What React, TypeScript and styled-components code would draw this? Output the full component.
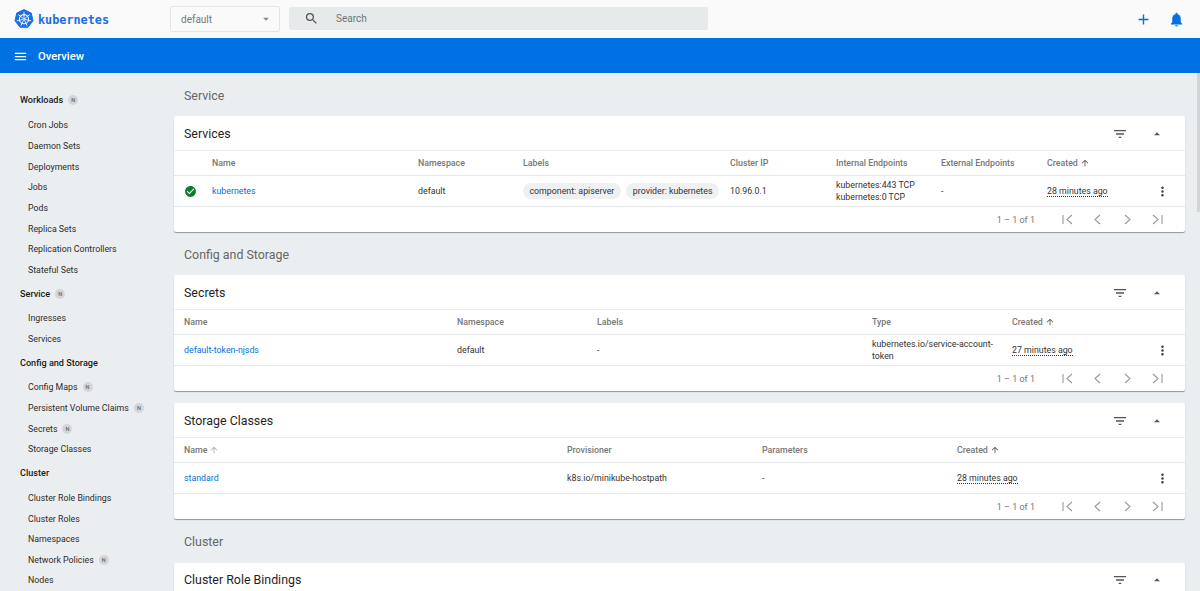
import React from 'react';
import styled, { createGlobalStyle } from 'styled-components';
import {
  MdMenu, MdSearch, MdAdd, MdNotifications, MdFilterList, MdArrowDropUp, MdArrowDropDown,
  MdMoreVert, MdCheckCircle, MdArrowUpward,
} from 'react-icons/md';

const Global = createGlobalStyle`
  html, body { margin: 0; padding: 0; height: 100%; overflow: hidden; background: #ebeef0; }
  body { font-family: Roboto, "Liberation Sans", sans-serif; -webkit-font-smoothing: antialiased; }
  * { box-sizing: border-box; }
`;

const Page = styled.div`
  position: relative;
  width: 1200px;
  height: 591px;
  overflow: hidden;
  display: flex;
  flex-direction: column;
  background: #ebeef0;
`;
const Toolbar = styled.header`
  height: 38px;
  flex: none;
  background: #fafafa;
  display: flex;
  align-items: center;
  padding-left: 14px;
`;
const Brand = styled.div`
  width: 156px;
  display: flex;
  align-items: center;
  gap: 4px;
  flex: none;
`;
const BrandName = styled.span`
  font-family: "DejaVu Sans Mono", "Liberation Mono", monospace;
  font-size: 11.8px;
  font-weight: 700;
  color: #1a6ee0;
  margin-top: 1px;
`;
const NsSelect = styled.div`
  width: 110px;
  height: 26px;
  border: 1px solid #e3e6e8;
  border-radius: 2px;
  display: flex;
  align-items: center;
  justify-content: space-between;
  padding: 0 6px 0 10px;
  font-size: 10px;
  color: #777;
  flex: none;
`;
const SearchBox = styled.div`
  width: 419px;
  height: 23px;
  margin-left: 9px;
  background: #e7eaeb;
  border-radius: 2px;
  display: flex;
  align-items: center;
  padding-left: 15px;
  gap: 17px;
  font-size: 10px;
  color: #6f7375;
  flex: none;
  margin-top: -1px;
`;
const ToolbarActions = styled.div`
  margin-left: auto;
  display: flex;
  align-items: center;
  gap: 16px;
  padding-right: 15px;
  color: #0071e3;
`;
const BlueBar = styled.div`
  height: 35px;
  flex: none;
  background: #0071e3;
  color: #fff;
  display: flex;
  align-items: center;
  padding: 1px 0 0 13px;
  gap: 10px;
  font-size: 11.2px;
  font-weight: 500;
`;
const Body = styled.div`
  flex: 1;
  display: flex;
  min-height: 0;
`;
const Sidebar = styled.nav`
  width: 174px;
  flex: none;
  padding-top: 16.6px;
  display: flex;
  flex-direction: column;
`;
const Category = styled.div`
  height: 20px;
  margin-top: 3.4px;
  padding-left: 20px;
  display: flex;
  align-items: center;
  gap: 5px;
  font-size: 9.1px;
  font-weight: 500;
  color: #1a1a1a;
  &:first-child { margin-top: 0; margin-bottom: 1px; }
  & + a { margin-top: 4.4px; }
`;
const NavItem = styled.a`
  height: 20.67px;
  flex: none;
  padding-left: 28px;
  display: flex;
  align-items: center;
  gap: 5px;
  font-size: 8.8px;
  color: #2c2c2c;
`;
const NewBadge = styled.span`
  width: 10px;
  height: 10px;
  border-radius: 50%;
  background: #d3d6d8;
  color: #666;
  font-size: 5.5px;
  display: inline-flex;
  align-items: center;
  justify-content: center;
  font-weight: 500;
`;
const Content = styled.main`
  width: 1011px;
  flex: none;
`;
const SectionTitle = styled.h2<{ $gap?: number }>`
  margin: 0;
  height: ${(p) => p.$gap ?? 43.4}px;
  display: flex;
  align-items: center;
  padding: 2px 0 0 10px;
  font-size: 12.4px;
  font-weight: 400;
  color: #666;
`;
const Card = styled.section<{ $mb?: number }>`
  background: #fff;
  border-radius: 2px;
  height: 115.6px;
  margin-bottom: ${(p) => p.$mb ?? 0}px;
  box-shadow: 0 1px 1px rgba(0, 0, 0, 0.38);
  display: flex;
  flex-direction: column;
  overflow: hidden;
`;
const CardHeader = styled.div`
  height: 35px;
  flex: none;
  display: flex;
  align-items: center;
  padding: 0 10px;
  border-bottom: 1.5px solid #eceeef;
  font-size: 12.4px;
  color: #1f1f1f;
`;
const CardTitle = styled.span`
  flex: 1;
`;
const CardActions = styled.div`
  display: flex;
  align-items: center;
  gap: 22px;
  padding: 1px 11px 0 0;
  color: #555;
`;
const Row = styled.div<{ $cols: string; $h: number }>`
  display: grid;
  grid-template-columns: ${(p) => p.$cols};
  height: ${(p) => p.$h}px;
  flex: none;
  align-items: center;
  padding-left: 10px;
  border-bottom: 1px solid #e6e8e9;
  font-size: 8.8px;
  color: #333;
`;
const HeadCell = styled.div`
  font-size: 8.8px;
  font-weight: 500;
  color: #777;
  display: flex;
  align-items: center;
  gap: 2px;
`;
const Cell = styled.div`
  line-height: 12.5px;
  min-width: 0;
`;
const LinkText = styled.span`
  color: #0071e3;
`;
const Chips = styled.div`
  display: flex;
  gap: 5.5px;
`;
const Chip = styled.span`
  height: 16px;
  padding: 0 6.5px;
  border-radius: 8px;
  background: #eef0f1;
  display: inline-flex;
  align-items: center;
  white-space: nowrap;
  font-size: 8.8px;
`;
const Age = styled.span`
  border-bottom: 1px dotted #333;
  line-height: 9px;
  display: inline-block;
`;
const MenuCell = styled.div`
  display: flex;
  color: #444;
  margin-left: -7px;
`;
const StatusIcon = styled.div`
  display: flex;
  color: #0a7d2c;
`;
const Footer = styled.div`
  flex: 1;
  display: flex;
  align-items: center;
  justify-content: flex-end;
  padding-right: 20px;
  font-size: 9px;
  color: #777;
`;
const Pager = styled.div`
  display: flex;
  align-items: center;
  gap: 15px;
  margin-left: 25px;
  color: #999;
`;
const Scrollbar = styled.div`
  position: absolute;
  right: 0;
  top: 73px;
  width: 3px;
  height: 139px;
  background: #d2d4d5;
`;

const KubeLogo = () => (
  <svg width="20" height="20" viewBox="0 0 20 20" aria-hidden="true">
    <polygon points="10,0.6 17.2,4 19,11.8 14,18.2 6,18.2 1,11.8 2.8,4" fill="#1a6ee0" strokeLinejoin="round" stroke="#1a6ee0" />
    <g stroke="#fff" fill="none" strokeLinecap="round">
      <circle cx="10" cy="10.2" r="4.6" strokeWidth="1.1" />
      <circle cx="10" cy="10.2" r="1" strokeWidth="0.9" />
      <path
        d="M10 3.2V8.4M15.5 5.8L11.4 9M16.8 11.8L11.8 10.6M13 16.5L10.8 11.8M7 16.5L9.2 11.8M3.2 11.8L8.2 10.6M4.5 5.8L8.6 9"
        strokeWidth="0.9"
      />
    </g>
  </svg>
);

const PagerIcon = ({ d }: { d: string }) => (
  <svg width="15" height="15" viewBox="0 0 15 15" fill="none" stroke="currentColor" strokeWidth="1.1" aria-hidden="true">
    <path d={d} />
  </svg>
);

type NavEntry = { label: string; cat?: boolean; badge?: boolean };
const nav: NavEntry[] = [
  { label: 'Workloads', cat: true, badge: true },
  { label: 'Cron Jobs' }, { label: 'Daemon Sets' }, { label: 'Deployments' }, { label: 'Jobs' },
  { label: 'Pods' }, { label: 'Replica Sets' }, { label: 'Replication Controllers' }, { label: 'Stateful Sets' },
  { label: 'Service', cat: true, badge: true },
  { label: 'Ingresses' }, { label: 'Services' },
  { label: 'Config and Storage', cat: true },
  { label: 'Config Maps', badge: true }, { label: 'Persistent Volume Claims', badge: true },
  { label: 'Secrets', badge: true }, { label: 'Storage Classes' },
  { label: 'Cluster', cat: true },
  { label: 'Cluster Role Bindings' }, { label: 'Cluster Roles' }, { label: 'Namespaces' },
  { label: 'Network Policies', badge: true }, { label: 'Nodes' },
];

const CardTop = ({ title }: { title: string }) => (
  <CardHeader>
    <CardTitle>{title}</CardTitle>
    <CardActions>
      <MdFilterList size={16} />
      <MdArrowDropUp size={14} />
    </CardActions>
  </CardHeader>
);

const CardFoot = () => (
  <Footer>
    1 – 1 of 1
    <Pager>
      <PagerIcon d="M3 3V12M12 3L7 7.5L12 12" />
      <PagerIcon d="M10 3L5 7.5L10 12" />
      <PagerIcon d="M5 3L10 7.5L5 12" />
      <PagerIcon d="M3 3L8 7.5L3 12M12 3V12" />
    </Pager>
  </Footer>
);

const Sort = ({ muted }: { muted?: boolean }) => (
  <MdArrowUpward size={10} color={muted ? '#aaa' : '#555'} />
);

const Menu = () => (
  <MenuCell>
    <MdMoreVert size={15} />
  </MenuCell>
);

const svcCols = '28px 206px 105px 207px 106px 105px 106px 115px 1fr';
const secCols = '273px 140px 275px 140px 150px 1fr';
const stoCols = '383px 195px 195px 205px 1fr';

export default function App() {
  return (
    <Page>
      <Global />
      <Toolbar>
        <Brand>
          <KubeLogo />
          <BrandName>kubernetes</BrandName>
        </Brand>
        <NsSelect>
          default
          <MdArrowDropDown size={14} color="#888" />
        </NsSelect>
        <SearchBox>
          <MdSearch size={15} color="#555" />
          Search
        </SearchBox>
        <ToolbarActions>
          <MdAdd size={17} />
          <MdNotifications size={17} />
        </ToolbarActions>
      </Toolbar>
      <BlueBar>
        <MdMenu size={15} />
        Overview
      </BlueBar>
      <Body>
        <Sidebar>
          {nav.map((n) =>
            n.cat ? (
              <Category key={n.label + 'c'}>
                {n.label}
                {n.badge && <NewBadge>N</NewBadge>}
              </Category>
            ) : (
              <NavItem key={n.label}>
                {n.label}
                {n.badge && <NewBadge>N</NewBadge>}
              </NavItem>
            ),
          )}
        </Sidebar>
        <Content>
          <SectionTitle>Service</SectionTitle>
          <Card>
            <CardTop title="Services" />
            <Row $cols={svcCols} $h={25}>
              <span />
              <HeadCell>Name</HeadCell>
              <HeadCell>Namespace</HeadCell>
              <HeadCell>Labels</HeadCell>
              <HeadCell>Cluster IP</HeadCell>
              <HeadCell>Internal Endpoints</HeadCell>
              <HeadCell>External Endpoints</HeadCell>
              <HeadCell>Created <Sort /></HeadCell>
              <span />
            </Row>
            <Row $cols={svcCols} $h={31}>
              <StatusIcon><MdCheckCircle size={13} /></StatusIcon>
              <Cell><LinkText>kubernetes</LinkText></Cell>
              <Cell>default</Cell>
              <Chips>
                <Chip>component: apiserver</Chip>
                <Chip>provider: kubernetes</Chip>
              </Chips>
              <Cell>10.96.0.1</Cell>
              <Cell>kubernetes:443 TCP<br />kubernetes:0 TCP</Cell>
              <Cell>-</Cell>
              <Cell><Age>28 minutes ago</Age></Cell>
              <Menu />
            </Row>
            <CardFoot />
          </Card>
          <SectionTitle>Config and Storage</SectionTitle>
          <Card $mb={12.4}>
            <CardTop title="Secrets" />
            <Row $cols={secCols} $h={25}>
              <HeadCell>Name</HeadCell>
              <HeadCell>Namespace</HeadCell>
              <HeadCell>Labels</HeadCell>
              <HeadCell>Type</HeadCell>
              <HeadCell>Created <Sort /></HeadCell>
              <span />
            </Row>
            <Row $cols={secCols} $h={31}>
              <Cell><LinkText>default-token-njsds</LinkText></Cell>
              <Cell>default</Cell>
              <Cell>-</Cell>
              <Cell>kubernetes.io/service-account-<br />token</Cell>
              <Cell><Age>27 minutes ago</Age></Cell>
              <Menu />
            </Row>
            <CardFoot />
          </Card>
          <Card>
            <CardTop title="Storage Classes" />
            <Row $cols={stoCols} $h={25}>
              <HeadCell>Name <Sort muted /></HeadCell>
              <HeadCell>Provisioner</HeadCell>
              <HeadCell>Parameters</HeadCell>
              <HeadCell>Created <Sort /></HeadCell>
              <span />
            </Row>
            <Row $cols={stoCols} $h={31}>
              <Cell><LinkText>standard</LinkText></Cell>
              <Cell>k8s.io/minikube-hostpath</Cell>
              <Cell>-</Cell>
              <Cell><Age>28 minutes ago</Age></Cell>
              <Menu />
            </Row>
            <CardFoot />
          </Card>
          <SectionTitle $gap={44}>Cluster</SectionTitle>
          <Card>
            <CardTop title="Cluster Role Bindings" />
          </Card>
        </Content>
      </Body>
      <Scrollbar />
    </Page>
  );
}
